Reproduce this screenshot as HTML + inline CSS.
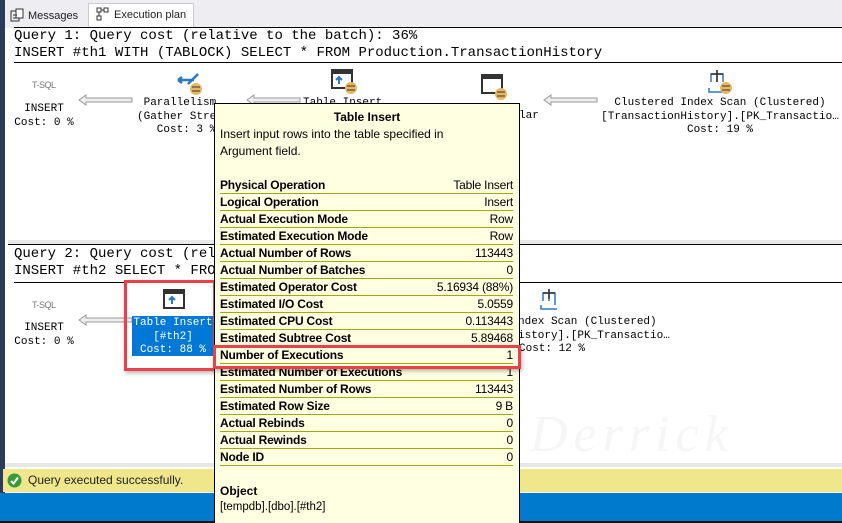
<!DOCTYPE html>
<html><head><style>
*{margin:0;padding:0;box-sizing:border-box}
body{width:842px;height:523px;overflow:hidden;background:#fff;position:relative;font-family:"Liberation Sans",sans-serif}
.a{position:absolute}
.mono{font-family:"Liberation Mono",monospace;white-space:nowrap;color:#000}
.q{font-size:14px}
.n{font-size:11px;text-align:center;line-height:13.5px}
.tt{left:214px;top:103px;width:306px;height:420px;background:#ffffe1;border:1px solid #000;border-bottom:none}
.row{position:absolute;left:5px;width:293px;height:17px;border-bottom:1px solid #a8a800;font-size:12px;line-height:17px;letter-spacing:-0.2px}
.row b{float:left}
.row span{float:right}
</style></head><body>
<div class="a" style="left:0;top:0;width:5px;height:495px;background:#2c3b57"></div>
<div class="a" style="left:5px;top:0;width:837px;height:28px;background:#eeeef2"></div>
<div class="a" style="left:10px;top:6px;width:78px;height:21px;font-size:11px;line-height:21px;color:#1e1e1e"><svg width="14" height="14" style="vertical-align:-3px;margin-right:4px"><rect x="1" y="3" width="8" height="10" fill="none" stroke="#333"/><rect x="6" y="1" width="7" height="9" fill="#fff" stroke="#333"/><line x1="3" y1="7" x2="7" y2="7" stroke="#333"/><line x1="3" y1="10" x2="7" y2="10" stroke="#333"/></svg>Messages</div>
<div class="a" style="left:88px;top:3px;width:106px;height:25px;background:#fff;border:1px solid #ccc;border-bottom:none;font-size:11px;line-height:22px;padding-left:7px;color:#1e1e1e"><svg width="14" height="14" style="vertical-align:-3px;margin-right:4px"><rect x="1" y="1" width="4" height="4" fill="none" stroke="#333"/><rect x="8" y="1" width="4" height="4" fill="none" stroke="#333"/><rect x="1" y="9" width="4" height="4" fill="none" stroke="#333"/><line x1="5" y1="3" x2="8" y2="3" stroke="#333"/><line x1="3" y1="5" x2="3" y2="9" stroke="#333"/></svg>Execution plan</div>
<div class="a" style="left:14px;top:27px;width:828px;height:1px;background:#000"></div>
<div class="a mono q" style="left:14px;top:28px">Query 1: Query cost (relative to the batch): 36%</div>
<div class="a mono q" style="left:14px;top:45px">INSERT #th1 WITH (TABLOCK) SELECT * FROM Production.TransactionHistory</div>
<div class="a" style="left:14px;top:62px;width:828px;height:1px;background:#000"></div>

<div class="a" style="left:32px;top:80px;font-size:9px;color:#777;letter-spacing:-0.5px">T-SQL</div>
<div class="a mono n" style="left:14px;top:103px;width:60px">INSERT<br>Cost: 0 %</div>
<svg class="a" style="left:78px;top:94px" width="56" height="12"><path d="M1 6 L8 1 V4 H54 V8 H8 V11 Z" fill="#eee" stroke="#999"/></svg>
<svg class="a" style="left:176px;top:70px" width="30" height="28"><path d="M2 10 H18 M2 10 l4 -3 M2 10 l4 3 M12 14 L22 4" stroke="#2a78c8" stroke-width="2.5" fill="none"/><circle cx="20" cy="19" r="6" fill="#e8b860"/><path d="M16 17h8M16 21h8" stroke="#333"/></svg>
<div class="a mono n" style="left:137px;top:97px;width:80px;text-align:left">&nbsp;Parallelism<br>(Gather Stre<br>&nbsp;&nbsp;&nbsp;Cost: 3 %</div>
<svg class="a" style="left:246px;top:94px" width="56" height="12"><path d="M1 6 L8 1 V4 H54 V8 H8 V11 Z" fill="#eee" stroke="#999"/></svg>
<svg class="a" style="left:331px;top:68px" width="30" height="28"><rect x="1" y="2" width="20" height="18" fill="#fff" stroke="#333" stroke-width="2"/><rect x="1" y="2" width="20" height="4" fill="#333"/><path d="M8 16 V9 M5 12 l3 -3 l3 3" stroke="#2a78c8" stroke-width="2" fill="none"/><circle cx="20" cy="20" r="6" fill="#e8b860"/><path d="M16 18h8M16 22h8" stroke="#333"/></svg>
<div class="a mono n" style="left:303px;top:97px">Table Insert</div>
<svg class="a" style="left:481px;top:73px" width="30" height="28"><rect x="1" y="2" width="20" height="18" fill="#fff" stroke="#333" stroke-width="2"/><rect x="1" y="2" width="20" height="4" fill="#333"/><circle cx="20" cy="21" r="6" fill="#e8b860"/><path d="M16 19h8M16 23h8" stroke="#333"/></svg>
<div class="a mono n" style="left:519px;top:110px;text-align:left">lar</div>
<svg class="a" style="left:543px;top:94px" width="56" height="12"><path d="M1 6 L8 1 V4 H54 V8 H8 V11 Z" fill="#eee" stroke="#999"/></svg>
<svg class="a" style="left:706px;top:68px" width="30" height="28"><path d="M11 2 V14 M5 14 V6 H17 V14 M3 20 V24 H19" stroke="#2a78c8" stroke-width="1.5" fill="none"/><path d="M11 2 V14 M5 6 H17" stroke="#333" stroke-width="1.5" fill="none"/><circle cx="20" cy="20" r="6" fill="#e8b860"/><path d="M16 18h8M16 22h8" stroke="#333"/></svg>
<div class="a mono n" style="left:600px;top:97px;width:240px">Clustered Index Scan (Clustered)<br>[TransactionHistory].[PK_Transactio…<br>Cost: 19 %</div>

<div class="a" style="left:8px;top:240px;width:834px;height:4px;background:#e8e8e8"></div>
<div class="a" style="left:8px;top:244px;width:834px;height:1px;background:#000"></div>
<div class="a mono q" style="left:14px;top:246px">Query 2: Query cost (relative to the batch): 64%</div>
<div class="a mono q" style="left:14px;top:263px">INSERT #th2 SELECT * FROM tempdb</div>
<div class="a" style="left:14px;top:282px;width:828px;height:1px;background:#000"></div>

<div class="a" style="left:32px;top:300px;font-size:9px;color:#777;letter-spacing:-0.5px">T-SQL</div>
<div class="a mono n" style="left:14px;top:322px;width:60px">INSERT<br>Cost: 0 %</div>
<svg class="a" style="left:78px;top:314px" width="56" height="12"><path d="M1 6 L8 1 V4 H54 V8 H8 V11 Z" fill="#eee" stroke="#999"/></svg>
<svg class="a" style="left:163px;top:288px" width="24" height="24"><rect x="1" y="2" width="20" height="18" fill="#fff" stroke="#333" stroke-width="2"/><rect x="1" y="2" width="20" height="4" fill="#333"/><path d="M9 16 V9 M6 12 l3 -3 l3 3" stroke="#2a78c8" stroke-width="2" fill="none"/></svg>
<div class="a mono n" style="left:132px;top:316px;width:82px;height:40px;background:#0078d7;color:#fff;padding-top:1px">Table Insert<br>[#th2]<br>Cost: 88 %</div>
<div class="a" style="left:124px;top:280px;width:92px;height:91px;border:3px solid #e8414a;box-shadow:1px 2px 4px rgba(0,0,0,.3)"></div>
<svg class="a" style="left:538px;top:287px" width="30" height="26"><path d="M11 2 V14 M5 14 V6 H17 V14 M3 18 V22 H19 M17 18 V14" stroke="#2a78c8" stroke-width="1.5" fill="none"/><path d="M11 2 V12 M5 6 H17" stroke="#333" stroke-width="1.5" fill="none"/></svg>
<div class="a mono n" style="left:518px;top:316px;text-align:left">ndex Scan (Clustered)<br>istory].[PK_Transactio…<br></div>
<div class="a mono n" style="left:519px;top:343px;text-align:left">Cost: 12 %</div>
<div class="a" style="left:530px;top:405px;font-size:52px;font-style:italic;color:#f6f6f6;font-family:'Liberation Serif',serif;letter-spacing:6px">Derrick</div>

<div class="a" style="left:5px;top:463px;width:837px;height:4px;background:#e6e6e6"></div>
<div class="a" style="left:3px;top:469px;width:839px;height:23px;background:#f0e68c;font-size:12px;line-height:23px;padding-left:25px;color:#222">Query executed successfully.</div>
<svg class="a" style="left:7px;top:473px" width="15" height="15"><circle cx="7.5" cy="7.5" r="7" fill="#3a9a3a"/><path d="M4 8 l2.5 2.5 l4.5 -6" stroke="#fff" stroke-width="2" fill="none"/></svg>
<div class="a" style="left:0;top:493px;width:842px;height:28px;background:#007acc"></div>
<div class="a" style="left:0;top:521px;width:842px;height:2px;background:#111"></div>

<div class="a tt">
<div style="text-align:center;font-weight:bold;font-size:12px;margin-top:6px">Table Insert</div>
<div style="font-size:12px;padding:2px 5px;line-height:17px;width:265px">Insert input rows into the table specified in Argument field.</div>
<div class="row" style="top:73px"><b>Physical Operation</b><span>Table Insert</span></div>
<div class="row" style="top:90px"><b>Logical Operation</b><span>Insert</span></div>
<div class="row" style="top:107px"><b>Actual Execution Mode</b><span>Row</span></div>
<div class="row" style="top:124px"><b>Estimated Execution Mode</b><span>Row</span></div>
<div class="row" style="top:141px"><b>Actual Number of Rows</b><span>113443</span></div>
<div class="row" style="top:158px"><b>Actual Number of Batches</b><span>0</span></div>
<div class="row" style="top:175px"><b>Estimated Operator Cost</b><span>5.16934 (88%)</span></div>
<div class="row" style="top:192px"><b>Estimated I/O Cost</b><span>5.0559</span></div>
<div class="row" style="top:209px"><b>Estimated CPU Cost</b><span>0.113443</span></div>
<div class="row" style="top:226px"><b>Estimated Subtree Cost</b><span>5.89468</span></div>
<div class="row" style="top:243px"><b>Number of Executions</b><span>1</span></div>
<div class="row" style="top:260px"><b>Estimated Number of Executions</b><span>1</span></div>
<div class="row" style="top:277px"><b>Estimated Number of Rows</b><span>113443</span></div>
<div class="row" style="top:294px"><b>Estimated Row Size</b><span>9 B</span></div>
<div class="row" style="top:311px"><b>Actual Rebinds</b><span>0</span></div>
<div class="row" style="top:328px"><b>Actual Rewinds</b><span>0</span></div>
<div class="row" style="top:345px"><b>Node ID</b><span>0</span></div>
<div style="position:absolute;left:5px;top:380px;font-size:12px;font-weight:bold">Object</div>
<div style="position:absolute;left:5px;top:397px;font-size:11.5px">[tempdb].[dbo].[#th2]</div>
</div>
<div class="a" style="left:213px;top:345px;width:308px;height:24px;border:3px solid #e8414a;box-shadow:1px 2px 4px rgba(0,0,0,.3)"></div>
</body></html>
